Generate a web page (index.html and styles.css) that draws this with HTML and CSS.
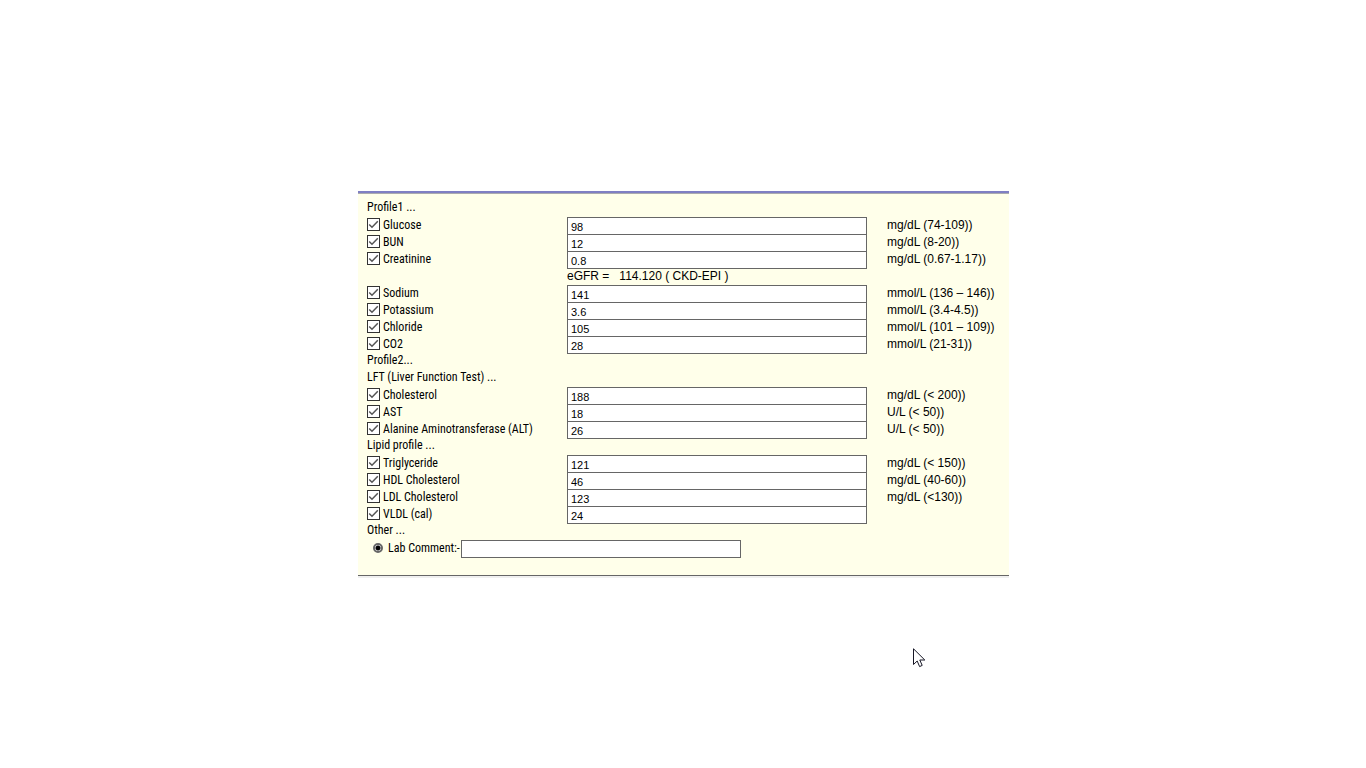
FILE: index.html
```html
<!DOCTYPE html>
<html lang="en">
<head>
<meta charset="utf-8">
<title>Lab Results</title>
<link rel="stylesheet" href="styles.css">
</head>
<body>
<form class="panel">
  <h2 class="heading first">Profile1 ...</h2>
  <div class="row"><label class="test"><input type="checkbox" class="check" checked>Glucose</label><input class="value" type="text" value="98" aria-label="Glucose value"><span class="unit">mg/dL (74-109))</span></div>
  <div class="row"><label class="test"><input type="checkbox" class="check" checked>BUN</label><input class="value" type="text" value="12" aria-label="BUN value"><span class="unit">mg/dL (8-20))</span></div>
  <div class="row"><label class="test"><input type="checkbox" class="check" checked>Creatinine</label><input class="value" type="text" value="0.8" aria-label="Creatinine value"><span class="unit">mg/dL (0.67-1.17))</span></div>
  <div class="row"><output class="egfr">eGFR =&nbsp;&nbsp; 114.120 ( CKD-EPI )</output></div>
  <div class="row"><label class="test"><input type="checkbox" class="check" checked>Sodium</label><input class="value" type="text" value="141" aria-label="Sodium value"><span class="unit">mmol/L (136 – 146))</span></div>
  <div class="row"><label class="test"><input type="checkbox" class="check" checked>Potassium</label><input class="value" type="text" value="3.6" aria-label="Potassium value"><span class="unit">mmol/L (3.4-4.5))</span></div>
  <div class="row"><label class="test"><input type="checkbox" class="check" checked>Chloride</label><input class="value" type="text" value="105" aria-label="Chloride value"><span class="unit">mmol/L (101 – 109))</span></div>
  <div class="row"><label class="test"><input type="checkbox" class="check" checked>CO2</label><input class="value" type="text" value="28" aria-label="CO2 value"><span class="unit">mmol/L (21-31))</span></div>
  <h2 class="heading">Profile2...</h2>
  <h2 class="heading">LFT (Liver Function Test) ...</h2>
  <div class="row"><label class="test"><input type="checkbox" class="check" checked>Cholesterol</label><input class="value" type="text" value="188" aria-label="Cholesterol value"><span class="unit">mg/dL (&lt; 200))</span></div>
  <div class="row"><label class="test"><input type="checkbox" class="check" checked>AST</label><input class="value" type="text" value="18" aria-label="AST value"><span class="unit">U/L (&lt; 50))</span></div>
  <div class="row"><label class="test"><input type="checkbox" class="check" checked>Alanine Aminotransferase (ALT)</label><input class="value" type="text" value="26" aria-label="ALT value"><span class="unit">U/L (&lt; 50))</span></div>
  <h2 class="heading">Lipid profile ...</h2>
  <div class="row"><label class="test"><input type="checkbox" class="check" checked>Triglyceride</label><input class="value" type="text" value="121" aria-label="Triglyceride value"><span class="unit">mg/dL (&lt; 150))</span></div>
  <div class="row"><label class="test"><input type="checkbox" class="check" checked>HDL Cholesterol</label><input class="value" type="text" value="46" aria-label="HDL Cholesterol value"><span class="unit">mg/dL (40-60))</span></div>
  <div class="row"><label class="test"><input type="checkbox" class="check" checked>LDL Cholesterol</label><input class="value" type="text" value="123" aria-label="LDL Cholesterol value"><span class="unit">mg/dL (&lt;130))</span></div>
  <div class="row"><label class="test"><input type="checkbox" class="check" checked>VLDL (cal)</label><input class="value" type="text" value="24" aria-label="VLDL value"></div>
  <h2 class="heading">Other ...</h2>
  <div class="comment"><label class="comment-label"><input type="radio" class="radio" name="other" checked>Lab Comment:-</label><input class="comment-box" type="text" aria-label="Lab comment"></div>
</form>
<svg class="pointer" width="13" height="20" viewBox="0 0 13 20" aria-hidden="true"><path d="M.5.8V16.5L4.2 13 6.6 18.6 9.2 17.4 6.8 12H11.8Z" fill="#fff" stroke="#161625" stroke-width="1"/></svg>
</body>
</html>
```
FILE: styles.css
```css
* { box-sizing: border-box; }
body {
  margin: 0;
  padding: 0 0 1px 1px;
  min-height: 100vh;
  display: flex;
  align-items: center;
  justify-content: center;
  background: #fff;
  color: #000;
  font-family: "Liberation Sans", Arial, sans-serif;
  font-size: 12px;
}
.panel {
  width: 100%;
  max-width: 651px;
  padding: 6px 9px 17px;
  background: #ffffea;
  border-top: 2px solid #7f7fc3;
  border-bottom: 1px solid #666;
  box-shadow: inset 0 1px #aaaaae, 0 2px #f0f0f0;
}
.heading, .test, .comment-label {
  font-family: "Roboto Condensed", Lato, sans-serif;
  font-size: 12px;
  font-weight: 400;
}
.heading {
  margin: 0;
  height: 17px;
  line-height: 14px;
}
.first { height: 18px; line-height: 16px; }
.row {
  display: grid;
  grid-template-columns: 200px minmax(0, 300px) 1fr;
  height: 17px;
}
.test {
  display: flex;
  align-items: flex-start;
  gap: 3px;
  padding-top: 1px;
  line-height: 14px;
}
.check {
  appearance: none;
  width: 13px;
  height: 13px;
  margin: 0;
  border: 1px solid #333;
  background: #fff url("data:image/svg+xml,%3Csvg xmlns='http://www.w3.org/2000/svg' viewBox='0 0 11 11'%3E%3Cpath d='M1.2 5.5 4 8.3 9.8 2.3' fill='none' stroke='%23555' stroke-width='1.5'/%3E%3C/svg%3E") center / 11px 11px no-repeat;
}
.value, .comment-box {
  width: 100%;
  height: 18px;
  margin: 0;
  border: 1px solid #666;
  border-radius: 0;
  background: #fff;
  color: #000;
  font-family: "Liberation Sans", Arial, sans-serif;
  font-size: 11px;
}
.value { padding: 2px 3px 0; }
.unit {
  padding-left: 20px;
  line-height: 16px;
  white-space: nowrap;
}
.egfr {
  grid-column: 2;
  line-height: 16px;
}
.comment { display: flex; padding-left: 6px; }
.comment-label {
  display: flex;
  align-items: center;
  gap: 5px;
  flex: 0 0 88px;
  height: 16px;
  white-space: nowrap;
}
.comment-box { flex: 0 1 280px; }
.radio {
  appearance: none;
  width: 10px;
  height: 10px;
  margin: 0;
  border: 2px solid #666;
  border-radius: 50%;
  background: radial-gradient(circle, #000 0 2px, #fff 3px);
}
.pointer {
  position: absolute;
  left: 913px;
  top: 648px;
}
```
